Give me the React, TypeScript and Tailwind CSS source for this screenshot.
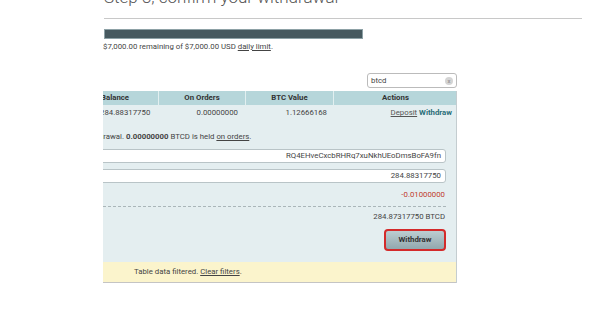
import React from 'react';

const Field: React.FC<{ label: string; value: string }> = ({ label, value }) => (
  <div className="flex items-center justify-between">
    <span className="font-bold">{label}</span>
    <div className="w-[380px] h-[14px] bg-white border border-[#b9c4c7] rounded-[3px] flex items-center justify-end px-[4px] text-[#444]">
      {value}
    </div>
  </div>
);

const App: React.FC = () => {
  return (
    <div className="w-[600px] h-[336px] overflow-hidden bg-white flex font-['Roboto',sans-serif] text-[7.8px] text-[#444]">
      <div className="w-[103px] shrink-0" />
      <div className="w-[480px] shrink-0 overflow-hidden">
        {/* Heading */}
        <div className="-mt-[13px] h-[20px] leading-[20px] text-[17px] font-light text-[#555] pl-[1px] whitespace-nowrap">
          Step 3, confirm your withdrawal
        </div>
        <div className="mt-[11px] ml-[1px] w-[478px] border-t border-[#c8c8c8]" />

        {/* Daily limit */}
        <div className="mt-[10px] ml-[1px] w-[259px] h-[10px] bg-[#46595f] border border-[#8da1a6]" />
        <div className="mt-[3px] h-[10px] leading-[10px] whitespace-nowrap">
          $7,000.00 remaining of $7,000.00 USD <span className="underline">daily limit</span>.
        </div>

        {/* Filter */}
        <div className="mt-[21px] w-[354px] flex justify-end">
          <div className="w-[90px] h-[15px] bg-white border border-[#bbb] rounded-[3px] flex items-center justify-between pl-[3px] pr-[3px]">
            <span>btcd</span>
            <span className="w-[8px] h-[8px] rounded-full bg-[#d4d4d4] text-[#888] text-[6px] leading-[8px] text-center">x</span>
          </div>
        </div>

        {/* Balances table */}
        <div className="mt-[3px] -ml-[210px] w-[564px] border-r border-[#c4cdd0]">
          <div className="grid grid-cols-[100px_97px_68px_87px_88px_124px] h-[14px] bg-[#b6d6da] font-bold text-[#333]">
            <div className="px-[5px] leading-[14px]">Coin</div>
            <div className="px-[5px] leading-[14px] border-l border-white/60">Name</div>
            <div className="pl-[10px] leading-[14px] border-l border-white/60">Balance</div>
            <div className="leading-[14px] text-center border-l border-white/60">On Orders</div>
            <div className="leading-[14px] text-center border-l border-white/60">BTC Value</div>
            <div className="leading-[14px] text-center border-l border-white/60">Actions</div>
          </div>
          <div className="bg-[#e4eef0]">
            <div className="grid grid-cols-[100px_97px_68px_87px_88px_124px] h-[16px] items-center">
              <div className="px-[5px]">BTCD</div>
              <div className="px-[5px]">BitcoinDark</div>
              <div className="pl-[10px]">284.88317750</div>
              <div className="text-right pr-[7px]">0.00000000</div>
              <div className="text-right pr-[6px]">1.12666168</div>
              <div className="text-right pr-[5px]">
                <span className="underline text-[#555]">Deposit</span>{' '}
                <span className="font-bold text-[#2b6f79]">Withdraw</span>
              </div>
            </div>

            <div className="pt-[11px] pb-[11px] pl-[40px] pr-[10px] flex flex-col">
              <div className="h-[10px] leading-[10px] whitespace-nowrap">
                You have 284.88317750 BTCD available for withdrawal. <span className="font-bold">0.00000000</span> BTCD is held{' '}
                <span className="underline">on orders</span>.
              </div>
              <div className="mt-[7px]">
                <Field label="Address:" value="RQ4EHveCxcbRHRq7xuNkhUEoDmsBoFA9fn" />
              </div>
              <div className="mt-[6px]">
                <Field label="Amount:" value="284.88317750" />
              </div>
              <div className="mt-[7px] h-[10px] leading-[10px] flex justify-between pr-[1px]">
                <span className="font-bold">Transaction Fee:</span>
                <span className="text-[#c0392b]">-0.01000000</span>
              </div>
              <div className="mt-[6px] border-t border-dashed border-[#aab6b9]" />
              <div className="mt-[5px] h-[10px] leading-[10px] flex justify-between pr-[1px]">
                <span className="font-bold">You Will Receive:</span>
                <span>284.87317750 BTCD</span>
              </div>
              <div className="mt-[7px] flex justify-end">
                <button className="w-[62px] h-[22px] rounded-[4px] border-2 border-[#d42a2a] bg-gradient-to-b from-[#bccdd1] to-[#92a8ae] text-[7.8px] font-bold text-[#333] font-['Roboto',sans-serif]">
                  Withdraw
                </button>
              </div>
            </div>
          </div>
          <div className="h-[21px] bg-[#fbf4cc] border-b border-[#c4c4c4] pl-[241px] flex items-center">
            Table data filtered.&nbsp;<span className="underline">Clear filters</span>.
          </div>
        </div>
      </div>
    </div>
  );
};

export default App;
